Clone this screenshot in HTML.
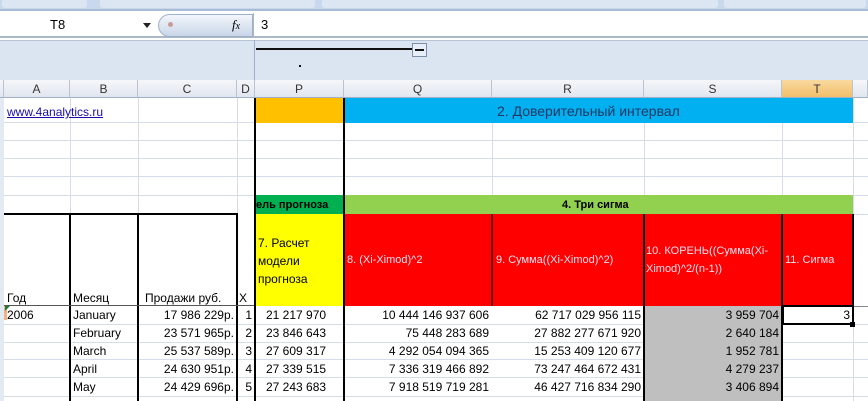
<!DOCTYPE html>
<html><head><meta charset="utf-8"><style>
*{margin:0;padding:0;box-sizing:border-box}
body{width:868px;height:401px;overflow:hidden;background:#fff;position:relative;font-family:"Liberation Sans",sans-serif;font-size:12px;color:#000}
div{position:absolute}
.t{white-space:nowrap;line-height:18px}
.r{text-align:right}
.h{background:linear-gradient(#f5f7fa,#e1e6ee);border-right:1px solid #b9c3d2;border-bottom:1px solid #9eb0c8;text-align:center;color:#333;font-size:12px;line-height:18px;top:80px;height:18px}
.hl{background:#d6dde8;height:1px}
.vl{background:#d6dde8;width:1px}
.bk{background:#000}
</style></head><body>
<!-- ribbon strip -->
<div style="left:0;top:0;width:868px;height:11px;background:#c9d8ec;border-bottom:2px solid #a9bcd6"></div>
<div style="left:2px;top:0;width:85px;height:8px;background:#dce6f3;border-radius:0 0 3px 3px"></div>
<div style="left:100px;top:0;width:215px;height:8px;background:#dce6f3;border-radius:0 0 3px 3px"></div>
<div style="left:322px;top:0;width:396px;height:8px;background:#dce6f3;border-radius:0 0 3px 3px"></div>
<div style="left:724px;top:0;width:142px;height:8px;background:#dce6f3;border-radius:0 0 3px 3px"></div>
<!-- formula bar -->
<div style="left:0;top:13px;width:868px;height:25px;background:#fff;border-bottom:2px solid #a9b7c8"></div>
<div class="t" style="left:50px;top:16px;width:40px;font-size:13px">T8</div>
<div style="left:143px;top:23px;width:0;height:0;border-left:4px solid transparent;border-right:4px solid transparent;border-top:5px solid #222"></div>
<div style="left:158px;top:14px;width:95px;height:23px;border-radius:12px 0 0 12px;background:linear-gradient(#f3f6fb,#c9d6e8);border:1px solid #9fb1c9"></div>
<div style="left:168px;top:22px;width:5px;height:5px;border-radius:50%;background:#c99"></div>
<div class="t" style="left:232px;top:16px;font-family:'Liberation Serif',serif;font-style:italic;font-size:13px">f<span style="font-size:10px">x</span></div>
<div style="left:253px;top:13px;width:1px;height:25px;background:#a9b7c8"></div>
<div class="t" style="left:261px;top:16px;font-size:13px">3</div>
<!-- outline area -->
<div style="left:0;top:40px;width:868px;height:40px;background:#dbe4f1;border-top:1px solid #b7c4d6"></div>
<div style="left:254px;top:40px;width:1px;height:40px;background:#9eb0c8"></div>
<div style="left:256px;top:48px;width:156px;height:2px;background:#111"></div>
<div style="left:412px;top:43px;width:15px;height:14px;border:1px solid #7d8fa8;background:#e8eef7"></div>
<div style="left:415px;top:49px;width:9px;height:2px;background:#111"></div>
<div style="left:299px;top:65px;width:2px;height:2px;background:#111"></div>
<!-- column headers -->
<div class="h" style="left:0;width:4px;top:80px"></div>
<div class="h" style="left:4px;width:66px">A</div>
<div class="h" style="left:70px;width:68px">B</div>
<div class="h" style="left:138px;width:99px">C</div>
<div class="h" style="left:237px;width:18px">D</div>
<div class="h" style="left:255px;width:89px">P</div>
<div class="h" style="left:344px;width:148px">Q</div>
<div class="h" style="left:492px;width:152px">R</div>
<div class="h" style="left:644px;width:138px">S</div>
<div class="h" style="left:782px;width:71px;background:linear-gradient(#f9d9a0,#f2bf6a)">T</div>
<div class="h" style="left:853px;width:15px"></div>
<div style="left:0;top:98px;width:4px;height:303px;background:#e4eaf3"></div>
<!-- gridlines horizontal -->
<div class="hl" style="left:4px;top:122px;width:864px"></div>
<div class="hl" style="left:4px;top:140px;width:864px"></div>
<div class="hl" style="left:4px;top:158px;width:864px"></div>
<div class="hl" style="left:4px;top:176px;width:864px"></div>
<div class="hl" style="left:4px;top:195px;width:864px"></div>
<div class="hl" style="left:4px;top:324px;width:864px"></div>
<div class="hl" style="left:4px;top:342px;width:864px"></div>
<div class="hl" style="left:4px;top:359px;width:864px"></div>
<div class="hl" style="left:4px;top:377px;width:864px"></div>
<div class="hl" style="left:4px;top:396px;width:864px"></div>
<div class="hl" style="left:853px;top:214px;width:15px"></div>
<div class="hl" style="left:853px;top:306px;width:15px;background:#888"></div>
<!-- gridlines vertical -->
<div class="vl" style="left:70px;top:98px;height:303px"></div>
<div class="vl" style="left:138px;top:98px;height:303px"></div>
<div class="vl" style="left:237px;top:98px;height:303px"></div>
<div class="vl" style="left:492px;top:122px;height:73px"></div>
<div class="vl" style="left:644px;top:122px;height:73px"></div>
<div class="vl" style="left:782px;top:122px;height:73px"></div>
<div class="vl" style="left:853px;top:98px;height:303px"></div>
<!-- row 1 -->
<div style="left:255px;top:98px;width:89px;height:25px;background:#ffc000"></div>
<div style="left:344px;top:98px;width:509px;height:25px;background:#00b0f0"></div>
<div class="t" style="left:497px;top:102px;font-size:14px;color:#1f3864">2. Доверительный интервал</div>
<div class="t" style="left:7px;top:103px;color:#1a0dab;text-decoration:underline">www.4analytics.ru</div>
<!-- green row -->
<div style="left:255px;top:195px;width:89px;height:19px;background:#00b050"></div>
<div class="t" style="left:256px;top:196px;font-weight:bold;font-size:11px;width:88px;overflow:hidden">ель прогноза</div>
<div style="left:344px;top:195px;width:509px;height:19px;background:#92d050"></div>
<div class="t" style="left:562px;top:196px;font-weight:bold;font-size:11px">4. Три сигма</div>
<!-- header row -->
<div style="left:255px;top:214px;width:89px;height:92px;background:#ffff00"></div>
<div style="left:258px;top:234px;line-height:18px;font-size:12px">7. Расчет<br>модели<br>прогноза</div>
<div style="left:344px;top:214px;width:509px;height:92px;background:#ff0000"></div>
<div class="t" style="left:347px;top:251px;color:#fde;font-size:11px">8. (Xi-Ximod)^2</div>
<div class="t" style="left:496px;top:251px;color:#fde;font-size:11px">9. Сумма((Xi-Ximod)^2)</div>
<div style="left:646px;top:242px;color:#fde;font-size:11px;line-height:18px">10. КОРЕНЬ((Сумма(Xi-<br>Ximod)^2/(n-1))</div>
<div class="t" style="left:785px;top:251px;color:#fde;font-size:11px">11. Сигма</div>
<div class="t" style="left:7px;top:289px">Год</div>
<div class="t" style="left:73px;top:289px">Месяц</div>
<div class="t" style="left:145px;top:289px">Продажи руб.</div>
<div class="t" style="left:239px;top:289px">X</div>
<!-- gray S column data -->
<div style="left:644px;top:306px;width:138px;height:95px;background:#bfbfbf"></div>
<!-- thick borders -->
<div class="bk" style="left:4px;top:213px;width:233px;height:2px"></div>
<div class="bk" style="left:69px;top:213px;width:2px;height:188px"></div>
<div class="bk" style="left:137px;top:213px;width:2px;height:188px"></div>
<div class="bk" style="left:236px;top:213px;width:2px;height:188px"></div>
<div class="bk" style="left:254px;top:98px;width:2px;height:303px"></div>
<div class="bk" style="left:343px;top:98px;width:2px;height:303px"></div>
<div class="bk" style="left:491px;top:214px;width:2px;height:92px;background:#600"></div>
<div class="bk" style="left:643px;top:214px;width:2px;height:187px"></div>
<div class="bk" style="left:781px;top:214px;width:2px;height:187px"></div>
<div class="bk" style="left:852px;top:214px;width:2px;height:92px"></div>
<div class="bk" style="left:4px;top:305px;width:250px;height:1px;background:#555"></div>
<!-- selected cell -->
<div style="left:782px;top:305px;width:72px;height:20px;border:2px solid #000"></div>
<div class="bk" style="left:850px;top:322px;width:5px;height:5px"></div>
<div class="t r" style="left:782px;top:306px;width:68px">3</div>
<div style="left:4px;top:306px;width:3px;height:14px;background:#f4b183"></div>
<div style="left:5px;top:306px;width:0;height:0;border-top:5px solid #1e7a3c;border-right:5px solid transparent"></div>
<!-- data -->
<div class="t" style="left:7px;top:306px">2006</div>
<div class="t" style="left:73px;top:306px">January</div>
<div class="t" style="left:73px;top:324px">February</div>
<div class="t" style="left:73px;top:342px">March</div>
<div class="t" style="left:73px;top:360px">April</div>
<div class="t" style="left:73px;top:378px">May</div>
<div class="t r" style="left:138px;top:306px;width:96px">17 986 229р.</div>
<div class="t r" style="left:138px;top:324px;width:96px">23 571 965р.</div>
<div class="t r" style="left:138px;top:342px;width:96px">25 537 589р.</div>
<div class="t r" style="left:138px;top:360px;width:96px">24 630 951р.</div>
<div class="t r" style="left:138px;top:378px;width:96px">24 429 696р.</div>
<div class="t r" style="left:237px;top:306px;width:15px">1</div>
<div class="t r" style="left:237px;top:324px;width:15px">2</div>
<div class="t r" style="left:237px;top:342px;width:15px">3</div>
<div class="t r" style="left:237px;top:360px;width:15px">4</div>
<div class="t r" style="left:237px;top:378px;width:15px">5</div>
<div class="t" style="left:266px;top:306px">21 217 970</div>
<div class="t" style="left:266px;top:324px">23 846 643</div>
<div class="t" style="left:266px;top:342px">27 609 317</div>
<div class="t" style="left:266px;top:360px">27 339 515</div>
<div class="t" style="left:266px;top:378px">27 243 683</div>
<div class="t r" style="left:344px;top:306px;width:145px">10 444 146 937 606</div>
<div class="t r" style="left:344px;top:324px;width:145px">75 448 283 689</div>
<div class="t r" style="left:344px;top:342px;width:145px">4 292 054 094 365</div>
<div class="t r" style="left:344px;top:360px;width:145px">7 336 319 466 892</div>
<div class="t r" style="left:344px;top:378px;width:145px">7 918 519 719 281</div>
<div class="t r" style="left:492px;top:306px;width:149px">62 717 029 956 115</div>
<div class="t r" style="left:492px;top:324px;width:149px">27 882 277 671 920</div>
<div class="t r" style="left:492px;top:342px;width:149px">15 253 409 120 677</div>
<div class="t r" style="left:492px;top:360px;width:149px">73 247 464 672 431</div>
<div class="t r" style="left:492px;top:378px;width:149px">46 427 716 834 290</div>
<div class="t r" style="left:644px;top:306px;width:135px">3 959 704</div>
<div class="t r" style="left:644px;top:324px;width:135px">2 640 184</div>
<div class="t r" style="left:644px;top:342px;width:135px">1 952 781</div>
<div class="t r" style="left:644px;top:360px;width:135px">4 279 237</div>
<div class="t r" style="left:644px;top:378px;width:135px">3 406 894</div>
</body></html>
